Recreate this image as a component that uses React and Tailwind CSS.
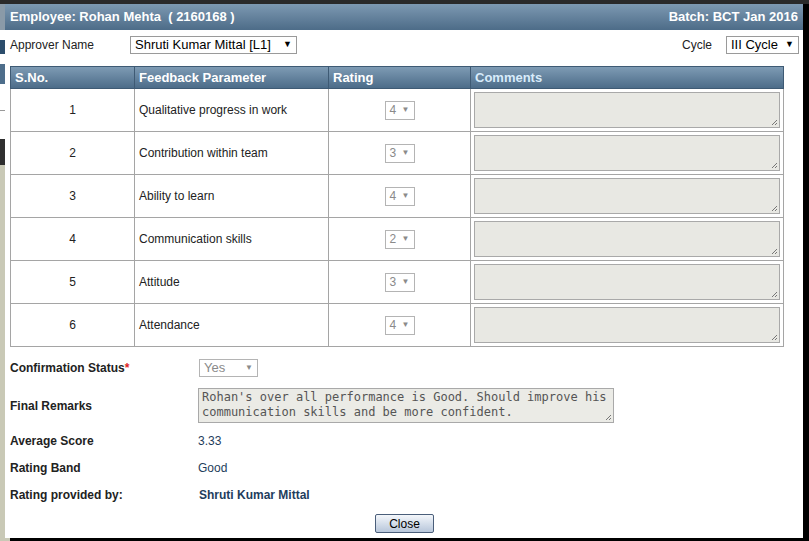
import React from 'react';

const rows = [
  { no: 1, param: 'Qualitative progress in work', rating: 4 },
  { no: 2, param: 'Contribution within team', rating: 3 },
  { no: 3, param: 'Ability to learn', rating: 4 },
  { no: 4, param: 'Communication skills', rating: 2 },
  { no: 5, param: 'Attitude', rating: 3 },
  { no: 6, param: 'Attendance', rating: 4 },
];

function Grip() {
  return (
    <svg className="absolute right-[1px] bottom-[1px]" width="7" height="7" viewBox="0 0 7 7">
      <path d="M6 1 L1 6 M6 4 L4 6" stroke="#777" strokeWidth="1" />
    </svg>
  );
}

export default function App() {
  return (
    <div className="w-[809px] h-[541px] bg-black flex flex-col overflow-hidden font-['Liberation_Sans',Arial,sans-serif]">
      <div className="h-[4px] bg-[#2a2a2a]" />
      <div className="flex flex-1">
        {/* page behind the dialog */}
        <div className="w-[5px] flex flex-col">
          <div className="h-[26px] bg-[#8a9aa8]" />
          <div className="h-[10px] bg-white" />
          <div className="h-[14px] bg-[#2c4d6c]" />
          <div className="h-[10px] bg-white" />
          <div className="h-[20px] bg-[#4e6e8b]" />
          <div className="h-[26px] bg-white" />
          <div className="h-[1px] bg-[#999]" />
          <div className="h-[28px] bg-white" />
          <div className="h-[26px] bg-[#2f2f2f]" />
          <div className="flex-1 bg-[#c9c9b6]" />
        </div>

        <div className="w-[798px] flex flex-col bg-white">
          {/* title bar */}
          <div className="h-[26px] flex items-center justify-between px-[5px] bg-gradient-to-b from-[#7d99b2] to-[#4d6c88] text-white font-bold text-[13px]">
            <span>Employee: Rohan Mehta &nbsp;( 2160168 )</span>
            <span>Batch: BCT Jan 2016</span>
          </div>

          {/* approver row */}
          <div className="mt-[6px] h-[18px] flex items-center pl-[5px] pr-[4px] text-[12px] text-[#222]">
            <span className="w-[120px]">Approver Name</span>
            <div className="w-[167px] h-[18px] border border-[#9a9a9a] flex items-center justify-between px-[4px] text-[13px] text-black">
              <span>Shruti Kumar Mittal [L1]</span>
              <span className="text-[9px]">▼</span>
            </div>
            <div className="flex-1" />
            <span className="mr-[14px]">Cycle</span>
            <div className="w-[73px] h-[18px] border border-[#9a9a9a] flex items-center justify-between px-[4px] text-[13px] text-black">
              <span>III Cycle</span>
              <span className="text-[9px]">▼</span>
            </div>
          </div>

          {/* feedback table */}
          <table className="mt-[12px] ml-[5px] w-[773px] border-collapse table-fixed text-[12px] text-[#222]">
            <colgroup>
              <col className="w-[124px]" />
              <col className="w-[194px]" />
              <col className="w-[142px]" />
              <col className="w-[313px]" />
            </colgroup>
            <thead>
              <tr className="h-[22px] bg-gradient-to-b from-[#7e9bb4] to-[#4a6a87] text-[13px] font-bold text-left">
                <th className="pl-[4px] border border-[#3e5a74] text-white">S.No.</th>
                <th className="pl-[4px] border border-[#3e5a74] text-white">Feedback Parameter</th>
                <th className="pl-[4px] border border-[#3e5a74] text-white">Rating</th>
                <th className="pl-[4px] border border-[#3e5a74] text-[#d8ecfb]">Comments</th>
              </tr>
            </thead>
            <tbody>
              {rows.map(r => (
                <tr key={r.no} className="h-[43px]">
                  <td className="border border-[#a5a5a5] text-center">{r.no}</td>
                  <td className="border border-[#a5a5a5] pl-[4px]">{r.param}</td>
                  <td className="border border-[#a5a5a5]">
                    <div className="mx-auto w-[30px] h-[19px] border border-[#b4b4b4] flex items-center justify-between pl-[4px] pr-[4px] text-[#8a8a8a] text-[12px]">
                      <span>{r.rating}</span>
                      <span className="text-[8px]">▼</span>
                    </div>
                  </td>
                  <td className="border border-[#a5a5a5] px-[3px]">
                    <div className="relative h-[36px] bg-[#e8e8e3] border border-[#a9a9a9]">
                      <Grip />
                    </div>
                  </td>
                </tr>
              ))}
            </tbody>
          </table>

          {/* summary */}
          <div className="pl-[5px] text-[12px] text-[#222]">
            <div className="mt-[12px] h-[18px] flex items-center">
              <span className="w-[189px] font-bold">Confirmation Status<span className="text-[#d22] align-top">*</span></span>
              <div className="w-[59px] h-[18px] border border-[#b4b4b4] flex items-center justify-between px-[4px] text-[#8a8a8a] text-[13px]">
                <span>Yes</span>
                <span className="text-[8px]">▼</span>
              </div>
            </div>
            <div className="mt-[11px] h-[35px] flex items-center">
              <span className="w-[188px] font-bold">Final Remarks</span>
              <div className="relative w-[416px] h-[35px] bg-[#ebebe6] border border-[#a9a9a9] px-[3px] pt-[1px] font-['DejaVu_Sans_Mono','Liberation_Mono',monospace] text-[12px] leading-[15px] text-[#555]">
                Rohan's over all performance is Good. Should improve his communication skills and be more confident.
                <Grip />
              </div>
            </div>
            <div className="mt-[9px] h-[18px] flex items-center">
              <span className="w-[188px] font-bold">Average Score</span>
              <span className="text-[#1e3d5c]">3.33</span>
            </div>
            <div className="mt-[9px] h-[18px] flex items-center">
              <span className="w-[188px] font-bold">Rating Band</span>
              <span className="text-[#1e3d5c]">Good</span>
            </div>
            <div className="mt-[9px] h-[18px] flex items-center">
              <span className="w-[189px] font-bold">Rating provided by:</span>
              <span className="font-bold text-[#1e3d5c]">Shruti Kumar Mittal</span>
            </div>
          </div>

          <div className="mt-[10px] flex pl-[370px]">
            <button className="w-[59px] h-[19px] border border-[#4a5e7a] rounded-[2px] bg-gradient-to-b from-[#f4f7fb] to-[#b7c6da] text-[12px] text-black leading-none">
              Close
            </button>
          </div>
          <div className="flex-1" />
        </div>
        <div className="flex-1 bg-black" />
      </div>
      <div className="h-[3px] flex">
        <div className="w-[10px] bg-[#c9c9b6]" />
        <div className="flex-1 bg-black" />
      </div>
    </div>
  );
}
